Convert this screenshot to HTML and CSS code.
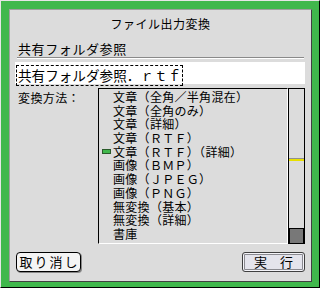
FILE: index.html
```html
<!DOCTYPE html>
<html lang="ja">
<head>
  <meta charset="UTF-8" />
  <title>ファイル出力変換</title>
  <link rel="stylesheet" href="styles.css">
</head>
<body>
  <div class="dialog">
    <div class="title">ファイル出力変換</div>
    <div class="folder-label">共有フォルダ参照</div>
    <div class="name-field"><span class="name-text">共有フォルダ参照．ｒｔｆ</span></div>

    <div class="method">
      <div class="method-label">変換方法：</div>
      <div class="listbox">
        <ul class="items">
          <li>文章（全角／半角混在）</li>
          <li>文章（全角のみ）</li>
          <li>文章（詳細）</li>
          <li>文章（ＲＴＦ）</li>
          <li class="selected">文章（ＲＴＦ）（詳細）</li>
          <li>画像（ＢＭＰ）</li>
          <li>画像（ＪＰＥＧ）</li>
          <li>画像（ＰＮＧ）</li>
          <li>無変換（基本）</li>
          <li>無変換（詳細）</li>
          <li>書庫</li>
        </ul>
        <div class="scrollbar">
          <div class="scroll-mark"></div>
          <div class="scroll-thumb"></div>
        </div>
      </div>
    </div>

    <div class="buttons">
      <button class="btn cancel">取り消し</button>
      <button class="btn run">実　行</button>
    </div>
  </div>
</body>
</html>
```

FILE: styles.css
```css
html, body {
  margin: 0;
  padding: 0;
}

body {
  width: 320px;
  height: 288px;
  box-sizing: border-box;
  background: #40b84c;
  border: 1px solid;
  border-color: #e6e6e6 #000 #000 #e6e6e6;
  padding: 8px 7px 5px 8px;
  font-family: "Noto Sans CJK JP", sans-serif;
  color: #000;
}

.dialog {
  height: 100%;
  box-sizing: border-box;
  background: #dcdcdc;
  border: 1px solid;
  border-color: #a0a0a0 #404040 #404040 #a0a0a0;
  display: flex;
  flex-direction: column;
}

.title {
  text-align: center;
  font-size: 12px;
  letter-spacing: 0.5px;
  line-height: 18px;
  padding: 5px 0 8px;
}

.folder-label {
  margin: 0 7px;
  padding-left: 1px;
  font-size: 13px;
  letter-spacing: 0.6px;
  line-height: 16px;
  height: 16px;
  border-bottom: 1px solid #8a8a8a;
  box-shadow: 0 1px 0 #fff;
}

.name-field {
  margin: 4px 6px 0 5px;
  height: 22px;
  background: #fff;
}

.name-text {
  display: inline-block;
  margin-left: 1px;
  height: 19px;
  padding: 0 1px;
  border: 1px dashed #000;
  font-size: 13.6px;
  line-height: 19px;
}

.method {
  display: flex;
  margin-top: 4px;
  height: 156px;
}

.method-label {
  width: 80px;
  padding: 2px 0 0 8px;
  font-size: 12px;
  letter-spacing: 0.4px;
  line-height: 16px;
}

.listbox {
  flex: 1;
  display: flex;
  margin-right: 6px;
}

.items {
  flex: 1;
  margin: 0;
  padding: 1px 0 0;
  list-style: none;
  border: 1px solid;
  border-color: #000 #fff #fff #000;
  font-size: 12px;
  letter-spacing: 0.3px;
  line-height: 13.7px;
}

.items li {
  display: flex;
  align-items: center;
  height: 13.7px;
  white-space: nowrap;
}

.items li::before {
  content: "";
  width: 9px;
  height: 5px;
  margin: 0 2px 0 3px;
  box-sizing: border-box;
}

.items li.selected::before {
  background: #40b84c;
  border: 1px solid #2a5a2a;
}

.scrollbar {
  width: 17px;
  box-sizing: border-box;
  border: 1px solid #000;
  display: flex;
  flex-direction: column;
}

.scroll-mark {
  margin-top: 69px;
  height: 2px;
  border-top: 1px solid #909090;
  background: #e8e000;
}

.scroll-thumb {
  margin: auto 0 0 0;
  height: 14px;
  border: 1px solid #000;
  border-bottom: 0;
  background: #787878;
}

.buttons {
  display: flex;
  justify-content: space-between;
  margin: 8px 6px 0 6px;
}

.btn {
  height: 20px;
  padding: 0;
  font-family: "Noto Sans CJK JP", sans-serif;
  font-size: 13px;
  line-height: 18px;
  color: #000;
}

.cancel {
  width: 65px;
  background: #f4f4f4;
  border: 1px solid #000;
  border-radius: 4px;
  box-shadow: 1px 1px 0 #888;
  letter-spacing: 2px;
  padding-left: 2px;
}

.run {
  width: 63px;
  background: #e4e4ec;
  border: 1px solid #404040;
  border-radius: 3px;
  box-shadow: inset 0 0 0 1px #f4f4f8, inset 0 0 0 2px #8a8a90;
}
```
